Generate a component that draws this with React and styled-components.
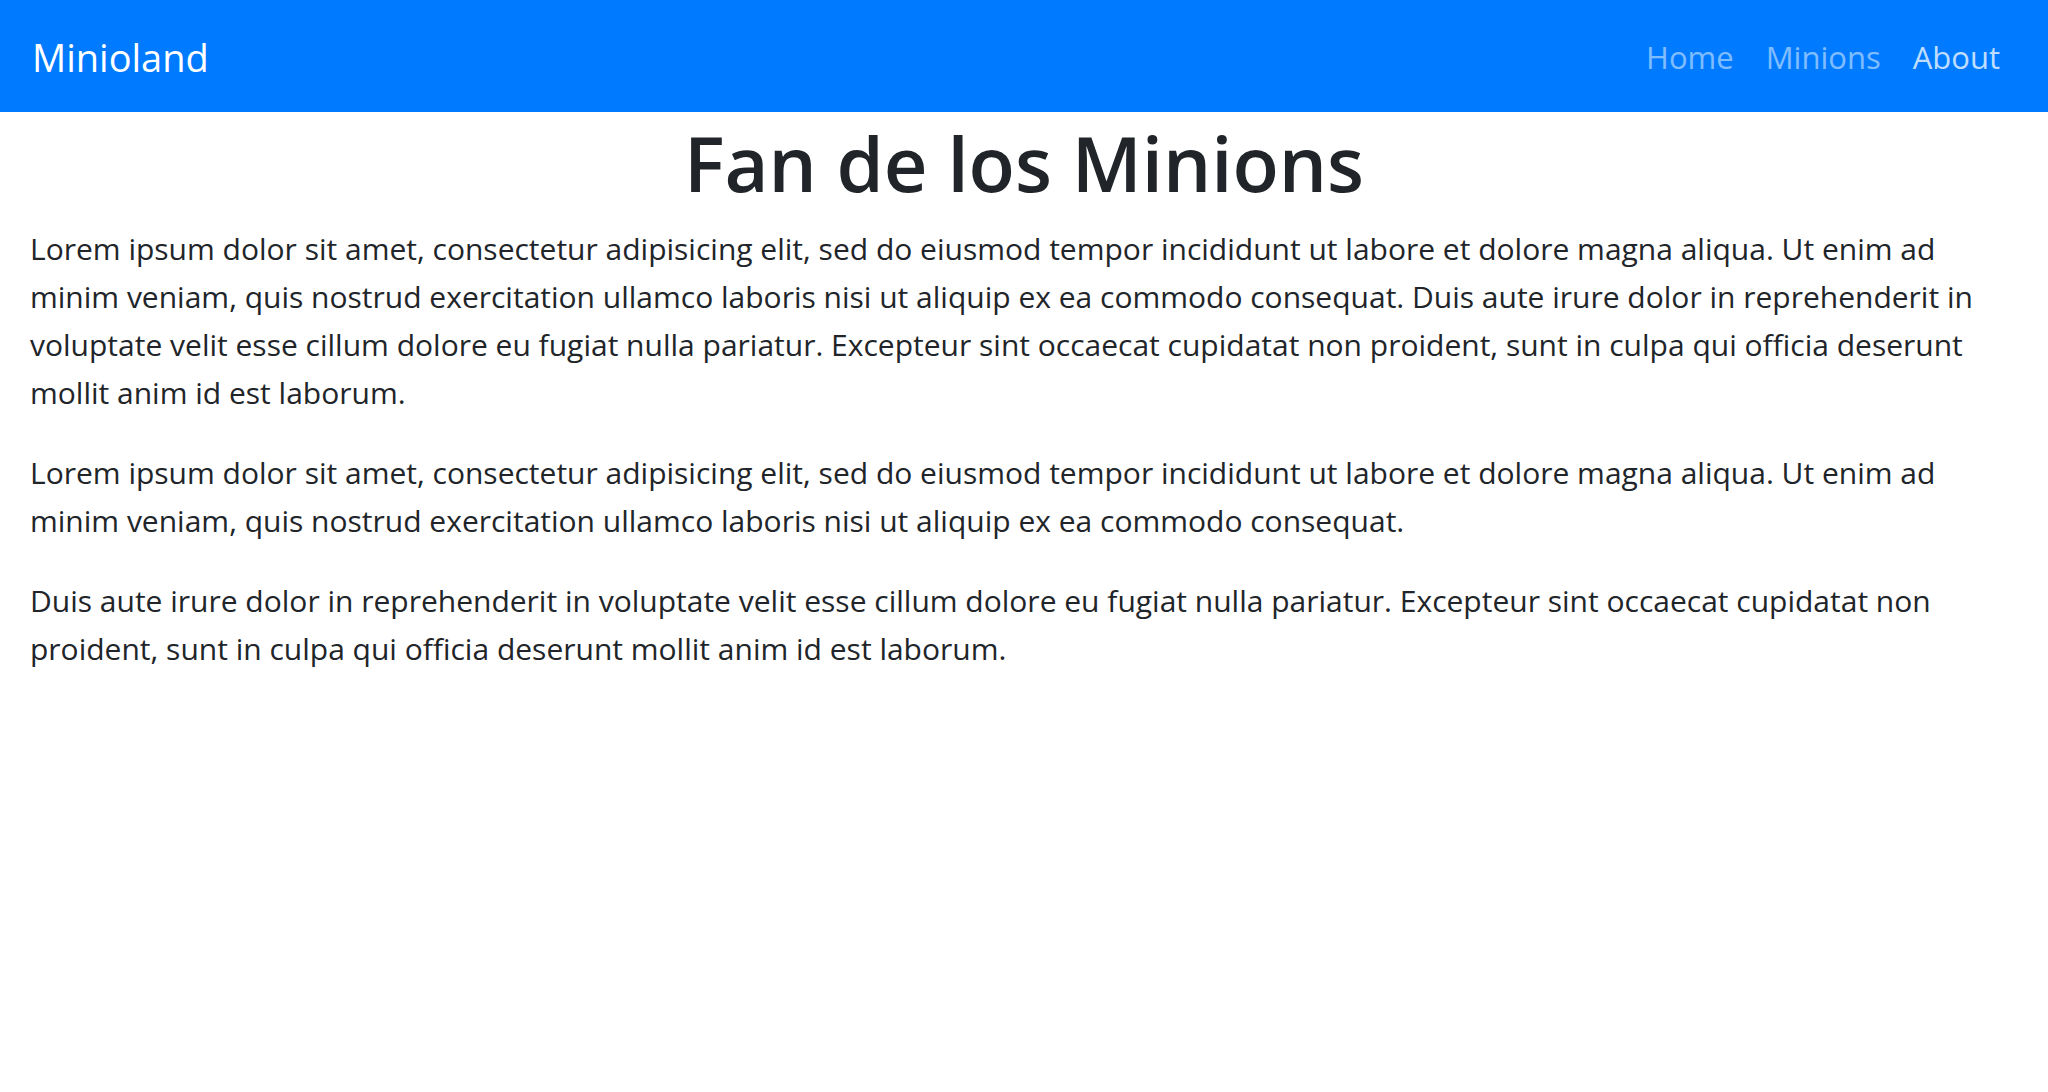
import React from 'react';
import styled, { createGlobalStyle } from 'styled-components';

const GlobalStyle = createGlobalStyle`
  *, *::before, *::after { box-sizing: border-box; }
  body {
    margin: 0;
    background: #fff;
    color: #212529;
    font: 400 30px/48px "Open Sans", "Noto Sans", sans-serif;
  }
`;

const Navbar = styled.nav`
  display: flex;
  align-items: center;
  justify-content: space-between;
  padding: 17px 32px 15px;
  background: #007bff;
`;

const Brand = styled.a`
  padding: 10px 0;
  color: #fff;
  font-size: 38px;
  line-height: 60px;
  text-decoration: none;
`;

const NavList = styled.ul`
  display: flex;
  margin: 0;
  padding: 0;
  list-style: none;
`;

const NavLink = styled.a`
  display: block;
  padding: 16px;
  color: ${({ $active }) => ($active ? 'rgba(255,255,255,.75)' : 'rgba(255,255,255,.5)')};
  font-size: 31px;
  text-decoration: none;
`;

const Content = styled.main`
  padding: 0 30px;
`;

const Title = styled.h1`
  margin: 0 0 12px;
  font-size: 76px;
  font-weight: 600;
  line-height: 101px;
  text-align: center;
`;

const Paragraph = styled.p`
  margin: 0 0 32px;
`;

const links = [
  { label: 'Home' },
  { label: 'Minions' },
  { label: 'About', active: true },
];

const paragraphs = [
  'Lorem ipsum dolor sit amet, consectetur adipisicing elit, sed do eiusmod tempor incididunt ut labore et dolore magna aliqua. Ut enim ad minim veniam, quis nostrud exercitation ullamco laboris nisi ut aliquip ex ea commodo consequat. Duis aute irure dolor in reprehenderit in voluptate velit esse cillum dolore eu fugiat nulla pariatur. Excepteur sint occaecat cupidatat non proident, sunt in culpa qui officia deserunt mollit anim id est laborum.',
  'Lorem ipsum dolor sit amet, consectetur adipisicing elit, sed do eiusmod tempor incididunt ut labore et dolore magna aliqua. Ut enim ad minim veniam, quis nostrud exercitation ullamco laboris nisi ut aliquip ex ea commodo consequat.',
  'Duis aute irure dolor in reprehenderit in voluptate velit esse cillum dolore eu fugiat nulla pariatur. Excepteur sint occaecat cupidatat non proident, sunt in culpa qui officia deserunt mollit anim id est laborum.',
];

export default function App() {
  return (
    <>
      <GlobalStyle />
      <Navbar>
        <Brand href="#">Minioland</Brand>
        <NavList>
          {links.map(({ label, active }) => (
            <li key={label}>
              <NavLink href="#" $active={active}>{label}</NavLink>
            </li>
          ))}
        </NavList>
      </Navbar>
      <Content>
        <Title>Fan de los Minions</Title>
        {paragraphs.map((text) => <Paragraph key={text}>{text}</Paragraph>)}
      </Content>
    </>
  );
}
